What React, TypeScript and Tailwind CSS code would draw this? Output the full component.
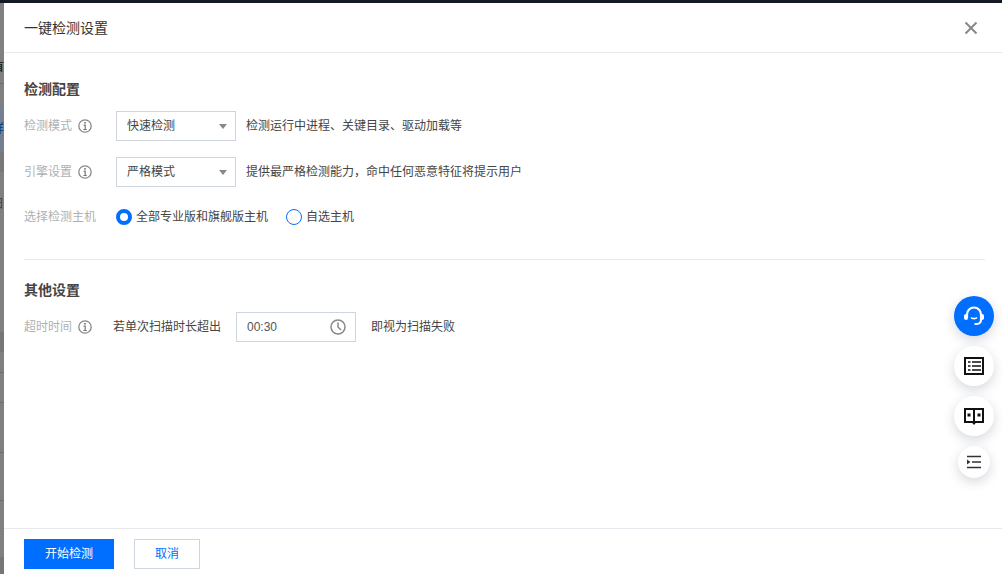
import type { ReactNode } from "react";

const FONT = "font-['Liberation_Sans','Noto_Sans_CJK_SC',sans-serif]";

// what shows of the page behind the drawer, top to bottom
const BEHIND = [
  { h: "h-[59px]", bg: "" },
  { h: "h-[10px]", bg: "", text: "首", color: "text-[#111]" },
  { h: "h-[11px]", bg: "" },
  { h: "h-px", bg: "bg-[#6e6e6e]" },
  { h: "h-[21px]", bg: "" },
  { h: "h-[47px]", bg: "bg-[#74808f]", text: "详", color: "text-[#003a88]" },
  { h: "h-[20px]", bg: "bg-[#787878]" },
  { h: "h-[26px]", bg: "" },
  { h: "h-[11px]", bg: "", text: "日", color: "text-[#444]" },
  { h: "h-[123px]", bg: "" },
  { h: "h-[20px]", bg: "bg-[#767676]" },
  { h: "h-[20px]", bg: "" },
  { h: "h-px", bg: "bg-[#6e6e6e]" },
  { h: "h-[29px]", bg: "" },
  { h: "h-px", bg: "bg-[#6e6e6e]" },
  { h: "h-[49px]", bg: "" },
  { h: "h-px", bg: "bg-[#6e6e6e]" },
  { h: "h-[47px]", bg: "" },
  { h: "h-px", bg: "bg-[#6e6e6e]" },
  { h: "h-[56px]", bg: "" },
  { h: "h-[17px]", bg: "bg-[#767676]" },
];

function InfoIcon() {
  return (
    <svg width="14" height="14" viewBox="0 0 14 14" fill="none" className="shrink-0">
      <circle cx="7" cy="7" r="6.200" stroke="#888" strokeWidth="1.300" />
      <rect x="6.200" y="3" width="1.600" height="1.600" fill="#777" />
      <path d="M5.600 6.200H7.200V10.500M5.400 10.500H8.800" stroke="#777" strokeWidth="1.200" />
    </svg>
  );
}

function Label({ text, info = true }: { text: string; info?: boolean }) {
  return (
    <div className="flex w-[92px] shrink-0 items-center gap-[6px] text-[#b0b0b0]">
      <span>{text}</span>
      {info && <InfoIcon />}
    </div>
  );
}

function Select({ value }: { value: string }) {
  return (
    <div className="flex h-[30px] w-[120px] shrink-0 items-center justify-between border border-[#cfd5de] pl-[10px] pr-[8px] text-[#444]">
      <span>{value}</span>
      <span className="mt-[1px] h-0 w-0 border-x-[4px] border-t-[5px] border-x-transparent border-t-[#888]" />
    </div>
  );
}

function Radio({ checked, children }: { checked?: boolean; children: ReactNode }) {
  return (
    <div className="flex items-center gap-[4px] text-[#444]">
      <span
        className={
          checked
            ? "h-4 w-4 rounded-full border-[4px] border-[#006eff] bg-white"
            : "h-4 w-4 rounded-full border border-[#006eff] bg-white"
        }
      />
      <span>{children}</span>
    </div>
  );
}

function FloatButton({ children, blue, small }: { children: ReactNode; blue?: boolean; small?: boolean }) {
  return (
    <div
      className={`flex items-center justify-center rounded-full shadow-[0_4px_12px_rgba(50,60,90,0.2)] ${
        blue ? "bg-[#006eff]" : "bg-white"
      } ${small ? "h-8 w-8" : "h-10 w-10"}`}
    >
      {children}
    </div>
  );
}

export default function App() {
  return (
    <div className={`${FONT} flex h-[574px] w-[1002px] flex-col overflow-hidden bg-[#808080] text-xs`}>
      <div className="h-[3px] shrink-0 bg-[#141a24]" />
      <div className="flex min-h-0 flex-1">
        <div className="flex w-1 shrink-0 flex-col overflow-hidden">
          {BEHIND.map((seg, i) => (
            <div key={i} className={`${seg.h} ${seg.bg} flex shrink-0 items-center justify-end overflow-hidden leading-none`}>
              {seg.text && <span className={`shrink-0 ${seg.color}`}>{seg.text}</span>}
            </div>
          ))}
        </div>

        <div className="relative flex min-w-0 flex-1 flex-col bg-white">
          <header className="flex h-[50px] shrink-0 items-center justify-between border-b border-[#e8e9ee] pl-5 pr-6">
            <h1 className="text-sm font-normal text-[#333]">一键检测设置</h1>
            <svg width="14" height="14" viewBox="0 0 14 14" fill="none" stroke="#888" strokeWidth="2">
              <path d="M1.500 1.500l11 11M12.500 1.500l-11 11" />
            </svg>
          </header>

          <main className="flex-1 pl-5 pr-[17px] pt-[28px]">
            <h2 className="text-sm leading-[16px] font-bold text-[#444]">检测配置</h2>
            <div className="mt-[14px] flex items-center">
              <Label text="检测模式" />
              <Select value="快速检测" />
              <span className="ml-[10px] text-[#444]">检测运行中进程、关键目录、驱动加载等</span>
            </div>
            <div className="mt-4 flex items-center">
              <Label text="引擎设置" />
              <Select value="严格模式" />
              <span className="ml-[10px] text-[#444]">提供最严格检测能力，命中任何恶意特征将提示用户</span>
            </div>
            <div className="mt-[22px] flex items-center">
              <Label text="选择检测主机" info={false} />
              <div className="flex items-center gap-[18px]">
                <Radio checked>全部专业版和旗舰版主机</Radio>
                <Radio>自选主机</Radio>
              </div>
            </div>

            <div className="mt-[34px] border-t border-[#e8e9ee]" />

            <h2 className="mt-[22px] text-sm leading-[16px] font-bold text-[#444]">其他设置</h2>
            <div className="mt-[14px] flex items-center">
              <Label text="超时时间" />
              <span className="-ml-[3px] mr-[15px] text-[#444]">若单次扫描时长超出</span>
              <div className="flex h-[30px] w-[120px] items-center justify-between border border-[#cfd5de] pl-[10px] pr-[9px] text-[#555]">
                <span>00:30</span>
                <svg width="16" height="16" viewBox="0 0 16 16" fill="none" stroke="#888" strokeWidth="1.500">
                  <circle cx="8" cy="8" r="7" />
                  <path d="M8 3.500V8l3 3" />
                </svg>
              </div>
              <span className="ml-[15px] text-[#444]">即视为扫描失败</span>
            </div>
          </main>

          <footer className="flex h-[46px] shrink-0 items-start gap-5 border-t border-[#e8e9ee] pl-5 pt-[10px]">
            <button className="h-[30px] w-[90px] bg-[#006eff] text-xs text-white">开始检测</button>
            <button className="h-[30px] w-[66px] border border-[#cfd5de] bg-white text-xs text-[#006eff]">取消</button>
          </footer>

          <div className="absolute right-2 top-[293px] flex flex-col items-center gap-[10px]">
            <FloatButton blue>
              <svg width="24" height="24" viewBox="0 0 24 24" fill="none" stroke="#fff" strokeWidth="2.200">
                <path d="M5 14V10.500a7 7 0 0 1 14 0V16a4 4 0 0 1-4 4h-2.500" />
                <rect x="2" y="10" width="4" height="6" rx="2" fill="#fff" stroke="none" />
                <rect x="18" y="10" width="4" height="6" rx="2" fill="#fff" stroke="none" />
                <path d="M9 13.500c1.400 1.500 4.600 1.500 6 0" strokeWidth="1.600" />
              </svg>
            </FloatButton>
            <FloatButton>
              <svg width="20" height="18" viewBox="0 0 20 18" fill="none" stroke="#111" strokeWidth="2">
                <rect x="1" y="1" width="18" height="16" />
                <path d="M8 5h9M8 9h9M8 13h9M4 5h2.500M4 9h2.500M4 13h2.500" strokeWidth="1.500" />
              </svg>
            </FloatButton>
            <FloatButton>
              <svg width="20" height="18" viewBox="0 0 20 18" fill="none" stroke="#111" strokeWidth="2">
                <path d="M10 2H1v13h9M10 2h9v13h-9M10 2v14" />
                <rect x="3.500" y="6.500" width="3" height="3" fill="#111" stroke="none" />
                <rect x="13.500" y="6.500" width="3" height="3" fill="#111" stroke="none" />
                <path d="M7.500 15L10 18l2.500-3z" fill="#111" stroke="none" />
              </svg>
            </FloatButton>
            <FloatButton small>
              <svg width="16" height="14" viewBox="0 0 16 14" fill="none" stroke="#333" strokeWidth="1.500">
                <path d="M1 1.500h14M6 7h9M1 12.500h14" />
                <path d="M1 4.500L4.500 7 1 9.500z" fill="#333" stroke="none" />
              </svg>
            </FloatButton>
          </div>
        </div>
      </div>
    </div>
  );
}
